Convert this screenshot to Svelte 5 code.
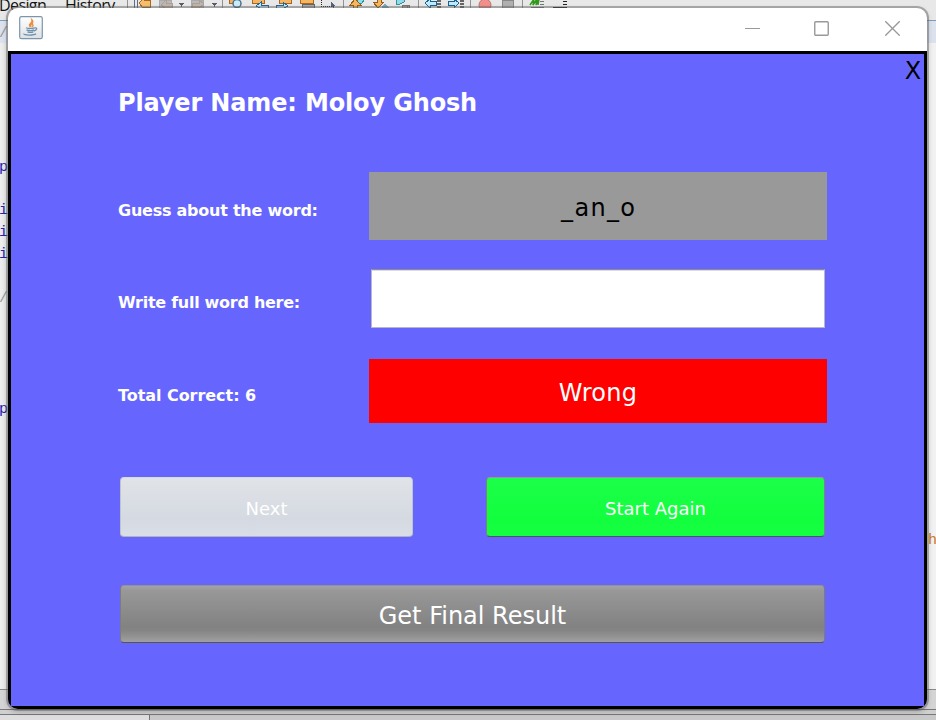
<script>
  const player = 'Moloy Ghosh';
  const hint = '_an_o';
  const score = 6;
  const verdict = 'Wrong';
  let answer = $state('');
  const leftCode = [
    { text: 'p', top: 158, kind: 'blue' },
    { text: 'i', top: 201, kind: 'blue' },
    { text: 'i', top: 223, kind: 'blue' },
    { text: 'i', top: 245, kind: 'blue' },
    { text: '/', top: 289, kind: 'grey' },
    { text: 'p', top: 400, kind: 'blue' }
  ];
  const separators = [127, 222, 343, 418, 470, 522];
</script>

<div class="desktop">
  <div class="toolbar">
    <span class="tab design">Design</span>
    <span class="tab history">History</span>
    <svg class="tools" width="936" height="8" viewBox="0 0 936 8" shape-rendering="crispEdges">
      {#each separators as x}
        <path d={`M${x + 0.5} 0V8`} stroke="#929292" />
      {/each}
      <path d="M134.500 0V8M137.500 0V8" stroke="#5b718b" />
      <path d="M139 3l5-5v2h6v7h-6l-1 1z" fill="#f4bd70" stroke="#ad681c" />
      <path d="M159 0h12v8h-12zM191 0h12v8h-12z" fill="#b9b9b9" stroke="#aaa" />
      <path d="M161 5l5-5v3h6v5h-7zM204 4l-5-4v3h-7v5h7z" fill="#c3b4a6" stroke="#a7a19b" />
      <path d="M179 3h5l-2.5 4zM212 3h5l-2.5 4z" fill="#565f69" />
      <path d="M229 -2h8v5h-8z" fill="#eeb163" stroke="#a6651f" />
      <circle cx="237" cy="3.500" r="4" fill="#c8edf8" stroke="#4b6f8d" stroke-width="1.500" shape-rendering="auto" />
      <path d="M252 -1h12v4h-12zM279 -1h12v4h-12zM300 -1h13v4h-13z" fill="#f4b663" stroke="#a76720" />
      <path d="M256 6l5-4v3h7v3h-8zM288 6l-5-4v3h-7v3h8z" fill="#c5eaff" stroke="#246797" />
      <path d="M302 4.500h12V8h-12z" fill="#aaa" stroke="#666" />
      <path d="M321.500 0v6.500h12" fill="none" stroke="#222" stroke-width="1" stroke-dasharray="1 1" />
      <path d="M331 2l4 4h-2l1 2-3-2z" fill="#50677d" />
      <path d="M357 -3h9l-4 6h-5z" fill="#92dbe8" stroke="#2992a3" />
      <path d="M350 5l5-6 6 6h-4v4h-4V5z" fill="#f4b75f" stroke="#985a16" />
      <path d="M373 2h4v-4h4v4h3l-6 6z" fill="#f4b75f" stroke="#985a16" />
      <path d="M382 6l3-2 4 4h-7z" fill="#78acc0" />
      <path d="M396 -2h10l-2 4-4 2h-4z" fill="#8edbea" stroke="#3690a0" />
      <path d="M402 8v-3h5v3M404 5h5v3" fill="#aaa" stroke="#777" />
      <path d="M425 3l5-4v2h6v4h-6v3zM459 3l-5-4v2h-6v4h6v3z" fill="#bdeaff" stroke="#17608f" />
      <path d="M437 1h4M437 4h4M437 7h4M460 1h4M460 4h4M460 7h4" stroke="#666" stroke-width="2" />
      <circle cx="485" cy="5" r="6" fill="#f18f8b" stroke="#b77575" shape-rendering="auto" />
      <path d="M502.500 0h11v8h-11z" fill="#b0b0b0" stroke="#888" />
      <path d="M530 5l4-6-1 6 4-6-1 6 3-6-1 6" fill="none" stroke="#329a1b" stroke-width="1.500" shape-rendering="auto" />
      <path d="M531 7.500h9M540 1.500h4M540 4.500h4M540 7.500h4" stroke="#777" stroke-width="1" />
      <path d="M553 7.500h14M563 1.500h4M563 4.500h4" stroke="#222" />
    </svg>
  </div>
  <div class="editor-heading"></div>
  <div class="editor"></div>
  <div class="panel"></div>
  <div class="status"></div>
  <div class="footer"></div>
  <span class="heading-slash">/</span>
  {#each leftCode as c}
    <span class="code {c.kind}" style:top="{c.top}px">{c.text}</span>
  {/each}
  <span class="code orange">h</span>

  <main class="window">
    <header>
      <svg class="java" width="24" height="24" viewBox="0 0 24 24">
        <defs><linearGradient id="java-bg" x2="0" y2="1"><stop stop-color="#fff" /><stop offset="1" stop-color="#dce0e4" /></linearGradient></defs>
        <rect x=".7" y=".7" width="22.600" height="22" rx="1.800" fill="url(#java-bg)" stroke="#7c95aa" stroke-width="1.200" />
        <path d="M11.500 11c-3.500-3 2.500-3.500 1.500-7 3 3-2.500 3.500-1.500 7M12.700 11c3.300-2-.8-2.500 1-4.500" fill="none" stroke="#ee8b3c" stroke-width="1.400" />
        <path d="M7 11.800c1.500 1 6.500.8 8.500 0M7.500 13.800c2 .8 5.800.8 7.500 0M8.500 15.800c1.500.6 4.500.6 5.800 0M15.500 12c3.500-1 2.500 2.500-.8 3M5 17.600c-1 2 10 2 12 .2" fill="none" stroke="#6d91ad" stroke-width="1.300" />
      </svg>
      <div class="controls">
        <svg width="15" height="16" viewBox="0 0 15 16"><path d="M0 8.500h15" stroke="#999" /></svg>
        <svg width="15" height="16" viewBox="0 0 15 16"><rect x=".75" y="1.750" width="13.500" height="13.500" rx="1" fill="none" stroke="#999" stroke-width="1.400" /></svg>
        <svg width="15" height="16" viewBox="0 0 15 16"><path d="M.3 1.300l14.400 14.400M14.700 1.300L.3 15.700" stroke="#999" stroke-width="1.300" /></svg>
      </div>
    </header>
    <section class="game">
      <button class="exit">X</button>
      <h1>Player Name: {player}</h1>
      <div class="row guess"><label for="word"><span class="l1">Guess about the word:</span></label><output id="word"><span class="hint">{hint}</span></output></div>
      <div class="row write"><label for="answer"><span class="l2">Write full word here:</span></label><input id="answer" bind:value={answer} /></div>
      <div class="row result"><label for="verdict"><span class="l3">Total Correct: {score}</span></label><output id="verdict"><span class="verdict">{verdict}</span></output></div>
      <div class="actions">
        <button class="next" disabled><span>Next</span></button>
        <button class="again"><span>Start Again</span></button>
      </div>
      <button class="final"><span>Get Final Result</span></button>
    </section>
  </main>
</div>

<style>
  .desktop { position: relative; width: 936px; height: 720px; overflow: hidden; display: flex; flex-direction: column; background: #eee; font-family: Verdana, "DejaVu Sans", sans-serif; }
  .desktop, .desktop * { box-sizing: border-box; }
  .toolbar { height: 20px; flex: none; background: #e8e8e8; position: relative; font: 16px "Open Sans", sans-serif; color: #111; }
  .tab { position: absolute; top: -6px; line-height: 22px; white-space: nowrap; }
  .design { left: -1px; letter-spacing: -.6px; }
  .history { left: 65px; letter-spacing: -.5px; }
  .tools { position: absolute; left: 0; top: 0; }
  .editor-heading { height: 23px; flex: none; border-top: 1px solid #7f9db9; background: #dbe2ee; }
  .editor { flex: 1; background: linear-gradient(90deg, #eee, #e4e4e4 8px, #eee 925px, #f2f2f2); }
  .panel { height: 20px; flex: none; border-top: 1px solid #888; background: #d4d4d4; }
  .status { height: 5px; flex: none; border-top: 1px solid #77777d; background: #d0d0d0; }
  .footer { height: 6px; flex: none; border-top: 1px solid #77777d; background: linear-gradient(90deg, #dedede 0 149px, #777 149px 150px, #c9c9c9 150px); }
  .heading-slash, .code { position: absolute; left: -1px; font: 15px/20px "Liberation Mono", monospace; color: #2424b0; }
  .heading-slash { top: 24px; color: #999; }
  .grey { color: #999; }
  .orange { left: 928px; top: 531px; color: #c87822; }
  .window { position: absolute; left: 8px; top: 8px; width: 919px; height: 701px; border-radius: 10px; overflow: hidden; background: #fff; display: flex; flex-direction: column; box-shadow: 0 0 0 2px #6666667a, 0 2px 5px 1px #0003; }
  header { height: 43px; flex: none; display: flex; justify-content: space-between; padding: 8px 27px 0 11px; }
  .controls { display: flex; gap: 54px; padding-top: 4px; }
  .controls svg:last-child { margin-left: 2px; }
  .game { position: relative; flex: 1; background: #6666ff; border: 3px solid #000; display: flex; flex-direction: column; padding: 31px 97px 0 107px; }
  button { border: 0; padding: 0; font-family: inherit; color: #fff; display: flex; align-items: center; justify-content: center; }
  .exit { position: absolute; right: 2px; top: 4px; width: 18px; height: 25px; background: none; color: #000; font-size: 24px; }
  h1 { margin: 0; font-size: 24px; line-height: 36px; height: 36px; color: #fff; white-space: nowrap; font-weight: bold; letter-spacing: -.15px; }
  .row { display: flex; flex: none; }
  label { flex: 0 0 251px; color: #fff; font-size: 16px; font-weight: bold; white-space: nowrap; display: flex; align-items: center; padding-top: 8px; }
  .l1 { letter-spacing: -.24px; }
  .l2 { letter-spacing: -.28px; }
  .l3 { letter-spacing: -.05px; }
  .hint { letter-spacing: 1.3px; margin-right: -1.3px; }
  .verdict { letter-spacing: .25px; }
  output { flex: 1; font-size: 24px; display: flex; align-items: center; justify-content: center; }
  .guess { height: 68px; margin-top: 51px; }
  .guess output { background: #999; padding-top: 3px; }
  .write { height: 59px; margin-top: 29px; padding-right: 2px; }
  .write label { flex-basis: 253px; }
  input { flex: 1; min-width: 0; border: 1px solid #b8b8c4; border-top: 1px solid #8c8c99; box-shadow: inset 0 1px #dcdcdc; background: #fff; padding: 0 8px; font-size: 24px; outline: 0; }
  .result { height: 64px; margin-top: 31px; }
  .result output { background: #f00; color: #fff; padding-top: 3px; }
  .actions { display: flex; justify-content: space-between; height: 60px; margin: 54px 2px 0; flex: none; }
  .next, .again { font-size: 18px; border-radius: 4px; padding-top: 3px; }
  .next { width: 293px; border: 1px solid #bfc4cc; border-top-color: #d6dbe0; border-bottom-color: #afb3b9; background: linear-gradient(#e0e4e8, #d5d9e1 70%, #d9dde5); }
  .again { width: 339px; border: 1px solid #7d8480; border-top-color: #949c96; border-bottom-color: #4f5853; background: linear-gradient(#1cff49, #12ff3e 70%, #14ff41); }
  .final { height: 58px; flex: none; margin: 48px 2px 0; border-radius: 4px; font-size: 24px; padding-top: 4px; border: 1px solid #7c7c7c; border-top-color: #929292; border-bottom-color: #555; background: linear-gradient(#a3a3a3, #989898 8%, #828282 73%, #858585 80%, #a0a0a0); }
</style>
